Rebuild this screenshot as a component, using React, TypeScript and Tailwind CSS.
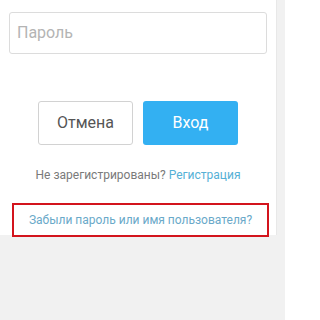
import React from 'react';

export default function App() {
    return (
        <div className="w-[285px] h-[320px] bg-[#f1f1f1] flex items-start font-['Roboto',sans-serif]">
            <div className="w-[277px] bg-white flex flex-col border-r border-[#e8e8e8]">
                <div className="mt-[12px] mx-[9px] h-[42px] border border-[#dcdcdc] rounded-[3px] flex items-center px-[7px]">
                    <input
                        className="w-full outline-none text-[16px] text-[#555] placeholder:text-[#b4b4b4] bg-transparent"
                        placeholder="Пароль"
                        type="password"
                    />
                </div>

                <div className="mt-[47px] flex justify-center gap-[10px]">
                    <button className="w-[95px] h-[44px] border border-[#d2d2d2] rounded-[3px] bg-white text-[16px] text-[#555]">
                        Отмена
                    </button>
                    <button className="w-[95px] h-[44px] rounded-[3px] bg-[#33b0f2] text-[16px] text-white">
                        Вход
                    </button>
                </div>

                <div className="mt-[21px] text-center text-[12px] leading-[18px] text-[#7a7a7a]">
                    Не зарегистрированы? <span className="text-[#55b0d6]">Регистрация</span>
                </div>

                <div className="mt-[19px] ml-[12px] w-[257px] h-[34px] -mb-[2px] border-2 border-[#d3141d] flex items-center justify-center text-[12px] text-[#6aa9c9]">
                    Забыли пароль или имя пользователя?
                </div>
            </div>
        </div>
    );
}
